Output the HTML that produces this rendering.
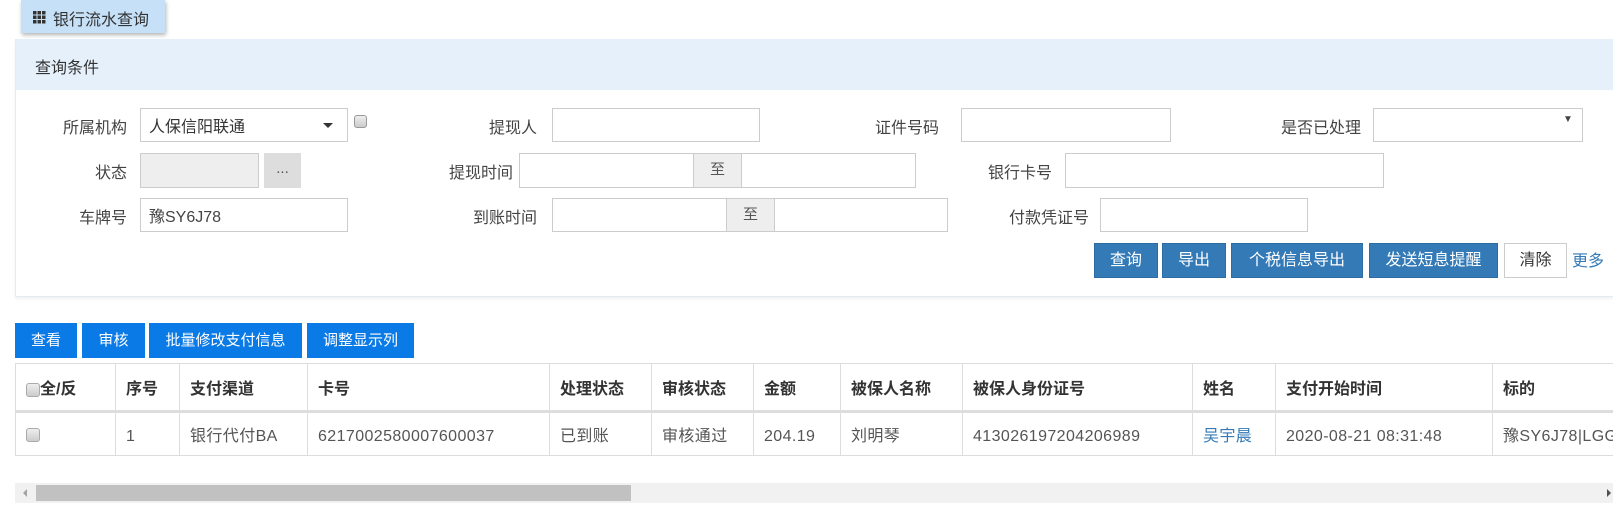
<!DOCTYPE html>
<html><head><meta charset="utf-8">
<style>
*{box-sizing:border-box;margin:0;padding:0}
body{width:1613px;height:520px;overflow:hidden;background:#fff;font-family:"Liberation Sans","Noto Sans CJK SC",sans-serif;font-size:16px;color:#333;position:relative}
.a{position:absolute}
.lbl{position:absolute;text-align:right;color:#444;font-size:16px;line-height:22px}
.in{position:absolute;border:1px solid #ccc;background:#fff;font-size:16px;line-height:32px;padding-left:8px;padding-top:3px;color:#444}
.add{position:absolute;border:1px solid #ccc;background:#eee;text-align:center;line-height:32px;color:#555;font-size:15px}
.bb{position:absolute;background:#337ab7;color:#fff;text-align:center;line-height:33px;border:1px solid #2e6da4;font-size:16px}
.tb{position:absolute;background:#0a7ae6;color:#fff;text-align:center;line-height:35px;font-size:15px;top:323px;height:35px}
.clip{position:absolute;left:0;top:0;width:1613px;height:520px;overflow:hidden}
table{position:absolute;left:15px;top:363px;border-collapse:collapse;table-layout:fixed;width:1598px}
td,th{border:1px solid #ddd;text-align:left;padding-left:10px;white-space:nowrap;overflow:hidden;font-size:16px}
th{height:48px;font-weight:bold;color:#333;border-bottom:3px solid #ddd}
td{height:44px;color:#555;letter-spacing:0.4px}
.n{position:relative;top:3px}
.cb{display:inline-block;width:14px;height:14px;border:1px solid #aaa;border-radius:3px;background:linear-gradient(#eee,#ccc);vertical-align:-1px}
td .cb{position:relative;top:3px}
</style></head><body>
<div class="clip">
<div class="a" style="left:21px;top:0;width:144px;height:33px;background:#c6e0f8;box-shadow:1px 2px 4px rgba(0,0,0,.3)"></div>
<svg class="a" style="left:33px;top:11px" width="13" height="13"><g fill="#333"><rect x="0" y="0" width="3.5" height="3.5"/><rect x="4.5" y="0" width="3.5" height="3.5"/><rect x="9" y="0" width="3.5" height="3.5"/><rect x="0" y="4.5" width="3.5" height="3.5"/><rect x="4.5" y="4.5" width="3.5" height="3.5"/><rect x="9" y="4.5" width="3.5" height="3.5"/><rect x="0" y="9" width="3.5" height="3.5"/><rect x="4.5" y="9" width="3.5" height="3.5"/><rect x="9" y="9" width="3.5" height="3.5"/></g></svg>
<div class="a" style="left:53px;top:6px;font-size:16px;color:#333">银行流水查询</div>

<div class="a" style="left:15px;top:39px;width:1598px;height:258px;border:1px solid #e3ebf3;border-right:none;box-shadow:0 2px 3px rgba(0,0,0,.06)"></div>
<div class="a" style="left:16px;top:39px;width:1597px;height:51px;background:#e6f0fb"></div>
<div class="a" style="left:35px;top:54px;color:#333;font-size:16px">查询条件</div>

<div class="lbl" style="left:30px;width:97px;top:118px">所属机构</div>
<div class="in" style="left:140px;top:108px;width:208px;height:34px;color:#333">人保信阳联通</div>
<div class="a" style="left:323px;top:123px;width:0;height:0;border-left:5px solid transparent;border-right:5px solid transparent;border-top:5px solid #333"></div>
<div class="a" style="left:354px;top:115px;width:13px;height:13px;border:1px solid #999;border-radius:3px;background:linear-gradient(#eee,#ccc)"></div>

<div class="lbl" style="left:30px;width:97px;top:163px">状态</div>
<div class="in" style="left:140px;top:153px;width:119px;height:35px;background:#eee"></div>
<div class="add" style="left:264px;top:153px;width:37px;height:35px;background:#ddd;border:none">...</div>

<div class="lbl" style="left:30px;width:97px;top:208px">车牌号</div>
<div class="in" style="left:140px;top:198px;width:208px;height:34px">豫SY6J78</div>

<div class="lbl" style="left:400px;width:137px;top:118px">提现人</div>
<div class="in" style="left:552px;top:108px;width:208px;height:34px"></div>
<div class="lbl" style="left:400px;width:113px;top:163px">提现时间</div>
<div class="in" style="left:519px;top:153px;width:175px;height:35px"></div>
<div class="add" style="left:693px;top:153px;width:49px;height:35px">至</div>
<div class="in" style="left:741px;top:153px;width:175px;height:35px"></div>
<div class="lbl" style="left:400px;width:137px;top:208px">到账时间</div>
<div class="in" style="left:552px;top:198px;width:175px;height:34px"></div>
<div class="add" style="left:726px;top:198px;width:49px;height:34px">至</div>
<div class="in" style="left:774px;top:198px;width:174px;height:34px"></div>

<div class="lbl" style="left:820px;width:119px;top:118px">证件号码</div>
<div class="in" style="left:961px;top:108px;width:210px;height:34px"></div>
<div class="lbl" style="left:930px;width:122px;top:163px">银行卡号</div>
<div class="in" style="left:1065px;top:153px;width:319px;height:35px"></div>
<div class="lbl" style="left:950px;width:139px;top:208px">付款凭证号</div>
<div class="in" style="left:1100px;top:198px;width:208px;height:34px"></div>

<div class="lbl" style="left:1230px;width:131px;top:118px">是否已处理</div>
<div class="in" style="left:1373px;top:108px;width:210px;height:34px"></div>
<div class="a" style="left:1563px;top:114px;font-size:10px;color:#444">▼</div>

<div class="bb" style="left:1094px;top:243px;width:64px;height:35px">查询</div>
<div class="bb" style="left:1162px;top:243px;width:64px;height:35px">导出</div>
<div class="bb" style="left:1231px;top:243px;width:132px;height:35px">个税信息导出</div>
<div class="bb" style="left:1369px;top:243px;width:129px;height:35px">发送短息提醒</div>
<div class="bb" style="left:1504px;top:243px;width:63px;height:35px;background:#fff;color:#333;border:1px solid #ccc">清除</div>
<div class="a" style="left:1572px;top:247px;color:#337ab7;font-size:16px">更多</div>

<div class="tb" style="left:15px;width:62px">查看</div>
<div class="tb" style="left:82px;width:63px">审核</div>
<div class="tb" style="left:149px;width:153px">批量修改支付信息</div>
<div class="tb" style="left:307px;width:107px">调整显示列</div>

<table>
<colgroup><col style="width:100px"><col style="width:64px"><col style="width:128px"><col style="width:242px"><col style="width:102px"><col style="width:102px"><col style="width:87px"><col style="width:122px"><col style="width:230px"><col style="width:83px"><col style="width:217px"><col style="width:121px"></colgroup>
<tr><th style="padding-left:10px"><span class="cb" style="position:relative;top:2px"></span>全/反</th><th>序号</th><th>支付渠道</th><th>卡号</th><th>处理状态</th><th>审核状态</th><th>金额</th><th>被保人名称</th><th>被保人身份证号</th><th>姓名</th><th>支付开始时间</th><th>标的</th></tr>
<tr><td><span class="cb"></span></td><td><span class="n">1</span></td><td>银行代付BA</td><td><span class="n">6217002580007600037</span></td><td>已到账</td><td>审核通过</td><td><span class="n">204.19</span></td><td>刘明琴</td><td><span class="n">413026197204206989</span></td><td style="color:#337ab7">吴宇晨</td><td><span class="n">2020-08-21 08:31:48</span></td><td>豫SY6J78|LGG8D3D14EZ</td></tr>
</table>

<div class="a" style="left:15px;top:483px;width:1598px;height:20px;background:#f1f1f1"></div>
<div class="a" style="left:36px;top:485px;width:595px;height:16px;background:#c1c1c1"></div>
<div class="a" style="left:23px;top:489px;width:0;height:0;border-top:4px solid transparent;border-bottom:4px solid transparent;border-right:4px solid #a3a3a3"></div>
<div class="a" style="left:1607px;top:489px;width:0;height:0;border-top:4px solid transparent;border-bottom:4px solid transparent;border-left:4px solid #505050"></div>
</div>
</body></html>
